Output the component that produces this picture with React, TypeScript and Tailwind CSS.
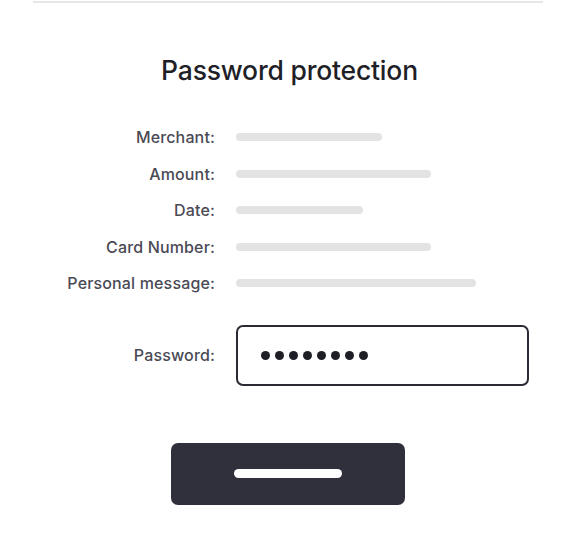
import React from "react";

const rows: { label: string; w: number }[] = [
  { label: "Merchant:", w: 146 },
  { label: "Amount:", w: 195 },
  { label: "Date:", w: 127 },
  { label: "Card Number:", w: 195 },
  { label: "Personal message:", w: 240 },
];

export default function App() {
  return (
    <div
      className="w-[579px] h-[548px] bg-white flex flex-col"
      style={{ fontFamily: "Inter, 'Noto Sans', sans-serif" }}
    >
      <div className="mt-[1px] ml-[33px] w-[510px] h-[2px] bg-[#e6e6e6]" />
      <h1 className="mt-[51px] text-center text-[26.5px] leading-[32px] font-medium text-[#1f1f28] tracking-[-0.2px]">
        Password protection
      </h1>
      <div className="mt-[33px] grid grid-cols-[215px_1fr] gap-x-[21px]">
        {rows.map((r) => (
          <React.Fragment key={r.label}>
            <div className="h-[36.5px] flex items-center justify-end text-[16px] font-medium text-[#4a4a55] tracking-[0.15px]">
              {r.label}
            </div>
            <div className="h-[36.5px] flex items-center">
              <div
                className="h-[8px] rounded-full bg-[#e3e3e3]"
                style={{ width: r.w }}
              />
            </div>
          </React.Fragment>
        ))}
        <div className="mt-[23px] h-[61px] flex items-center justify-end text-[16px] font-medium text-[#4a4a55] tracking-[0.15px]">
          Password:
        </div>
        <div className="mt-[23px] w-[293px] h-[61px] rounded-[7px] border-2 border-[#2b2b35] flex items-center pl-[23px] gap-[5px]">
          {Array.from({ length: 8 }).map((_, i) => (
            <span key={i} className="w-[9px] h-[9px] rounded-full bg-[#1e1e26]" />
          ))}
        </div>
      </div>
      <div className="mt-[57px] flex justify-center">
        <button className="ml-[-4px] w-[234px] h-[62px] rounded-[7px] bg-[#30303d] flex items-center justify-center">
          <span className="w-[108px] h-[9px] rounded-full bg-white" />
        </button>
      </div>
    </div>
  );
}
